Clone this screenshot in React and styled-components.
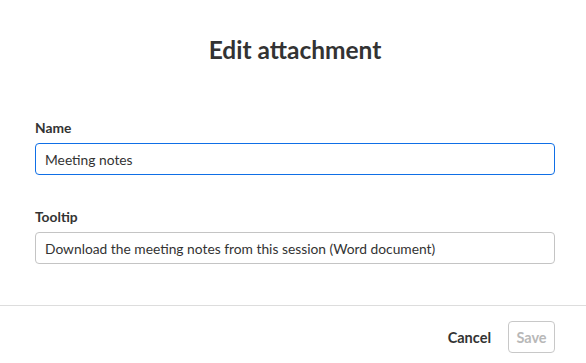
import React from 'react'
import styled, { createGlobalStyle } from 'styled-components'

const GlobalStyle = createGlobalStyle`
   html, body {
      margin: 0;
      padding: 0;
      background: #fff;
   }
   body {
      font-family: Lato, "Open Sans", sans-serif;
      color: #333;
   }
`

const Dialog = styled.div`
   width: 586px;
   height: 363px;
   display: flex;
   flex-direction: column;
   background: #fff;
`

const Title = styled.h1`
   margin: 0;
   padding: 35px 0 0 4px;
   font-size: 24.5px;
   line-height: 29px;
   font-weight: 700;
   text-align: center;
   color: #333;
`

const Body = styled.div`
   display: flex;
   flex-direction: column;
   gap: 34px;
   padding: 56px 31px 0 35px;
   height: 242px;
   box-sizing: border-box;
   border-bottom: 1px solid #ddd;
`

const Field = styled.div`
   display: flex;
   flex-direction: column;
   gap: 7px;
`

const Label = styled.label`
   font-size: 13.8px;
   line-height: 16px;
   font-weight: 700;
   color: #333;
`

const Input = styled.input`
   box-sizing: border-box;
   width: 520px;
   height: 32px;
   padding: 0 9px;
   font-family: Lato, "Open Sans", sans-serif;
   font-size: 13.8px;
   color: #333;
   background: #fff;
   border: 1px solid ${props => (props.focused ? '#0f6fe6' : '#c4c4c4')};
   border-radius: 4px;
   outline: none;
`

const Footer = styled.div`
   display: flex;
   justify-content: flex-end;
   align-items: center;
   gap: 17px;
   padding: 15px 31px 0 0;
`

const TextButton = styled.button`
   border: none;
   background: none;
   padding: 0;
   font-family: Lato, "Open Sans", sans-serif;
   font-size: 14.5px;
   font-weight: 700;
   color: #333;
`

const OutlineButton = styled.button`
   box-sizing: border-box;
   width: 47px;
   height: 32px;
   border: 1px solid #c8c8c8;
   border-radius: 4px;
   background: #fff;
   font-family: Lato, "Open Sans", sans-serif;
   font-size: 14.5px;
   font-weight: 700;
   color: #b8b8b8;
   padding: 0;
`

export default function App() {
   return (
      <>
         <GlobalStyle />
         <Dialog>
            <Title>Edit attachment</Title>
            <Body>
               <Field>
                  <Label>Name</Label>
                  <Input focused defaultValue="Meeting notes" />
               </Field>
               <Field>
                  <Label>Tooltip</Label>
                  <Input defaultValue="Download the meeting notes from this session (Word document)" />
               </Field>
            </Body>
            <Footer>
               <TextButton>Cancel</TextButton>
               <OutlineButton disabled>Save</OutlineButton>
            </Footer>
         </Dialog>
      </>
   )
}
